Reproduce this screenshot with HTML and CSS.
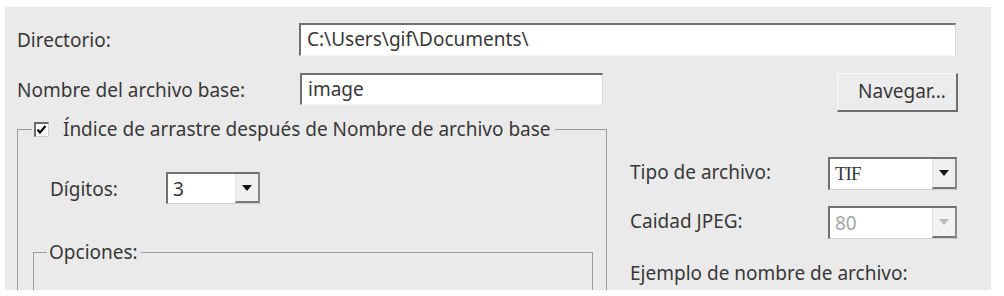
FILE: index.html
```html
<!DOCTYPE html>
<html>
<head>
<meta charset="UTF-8">
<title>Guardar imagen</title>
	<link rel="stylesheet" href="styles.css">
</head>
<body>
	<div class="panel">
		<!-- carpeta destino -->
		<div class="row">
			<span class="lbl lbl-main">Directorio:</span>
			<div class="box box-dir">C:\Users\gif\Documents\</div>
		</div>
		<div class="row row2">
			<span class="lbl lbl-main">Nombre del archivo base:</span>
			<div class="box box-name">image</div>
			<div class="btn">Navegar...</div>
		</div>

		<div class="lower">
			<fieldset class="group">
				<legend class="grp-title">
					<span class="check">
						<svg width="11" height="11" viewBox="0 0 11 11"><polyline points="1.5,5.5 4,8.5 9.5,2" fill="none" stroke="#111" stroke-width="2.4"/></svg>
					</span>
					Índice de arrastre después de Nombre de archivo base
				</legend>
				<div class="digits">
					<span class="lbl lbl-dig">Dígitos:</span>
					<div class="combo combo-dig"><span class="val">3</span><span class="drop"><i class="arrow"></i></span></div>
				</div>
				<fieldset class="group group-opt">
					<legend class="opt-title">Opciones:</legend>
				</fieldset>
			</fieldset>

			<div class="side">
				<div class="side-row">
					<span class="lbl lbl-side">Tipo de archivo:</span>
					<div class="combo combo-side"><span class="val val-tif">TIF</span><span class="drop"><i class="arrow"></i></span></div>
				</div>
				<div class="side-row side-row2">
					<span class="lbl lbl-side">Caidad JPEG:</span>
					<div class="combo combo-side off"><span class="val">80</span><span class="drop"><i class="arrow"></i></span></div>
				</div>
				<div class="sample">Ejemplo de nombre de archivo:</div>
			</div>
		</div>
	</div>
</body>
</html>
```
FILE: styles.css
```css
body{
	margin: 0;
	background: #ffffff;
	font-family: "Noto Sans", "DejaVu Sans", sans-serif;
	font-size: 19px;
	color: #383838;
}
.panel{
	margin: 7px 13px 0 5px;
	height: 283px;
	overflow: hidden;
	background: #eaeaea;
	padding: 16px 33px 0 12px;
	box-sizing: border-box;
}
.row{
	display: flex;
	align-items: center;
	height: 33px;
}
.row2{
	margin-top: 17px;
	height: 39px;
	align-items: flex-start;
}
.lbl{
	line-height: 26px;
	white-space: nowrap;
}
.lbl-main{
	width: 282px;
	flex: none;
}
.row2 .lbl-main{
	margin-top: 4px;
	width: 283px;
}
.box{
	background: #ffffff;
	border-top: 2px solid #707070;
	border-left: 2px solid #707070;
	border-right: 1px solid #d6d6d6;
	border-bottom: 1px solid #f4f4f4;
	box-sizing: border-box;
	padding-left: 6px;
	line-height: 28px;
	white-space: nowrap;
}
.box-dir{
	width: 657px;
	height: 33px;
}
.box-name{
	width: 303px;
	height: 32px;
}
.btn{
	margin-left: auto;
	width: 121px;
	height: 39px;
	box-sizing: border-box;
	background: #ececec;
	border-top: 1px solid #fafafa;
	border-left: 1px solid #fafafa;
	border-right: 2px solid #6e6e6e;
	border-bottom: 2px solid #6e6e6e;
	text-align: center;
	line-height: 35px;
	padding-left: 10px;
}

.lower{
	display: flex;
	margin-top: 6px;
}
.group{
	margin: 0;
	padding: 0;
	min-width: 0;
	border: 1px solid #9c9c9c;
	box-sizing: border-box;
	width: 590px;
	height: 240px;
	flex: none;
}
.grp-title{
	margin-left: 14px;
	padding: 0 4px 0 2px;
	line-height: 22px;
	white-space: nowrap;
}
.check{
	display: inline-block;
	width: 15px;
	height: 15px;
	box-sizing: border-box;
	background: #ffffff;
	border-top: 2px solid #6a6a6a;
	border-left: 2px solid #6a6a6a;
	border-right: 1px solid #cfcfcf;
	border-bottom: 1px solid #cfcfcf;
	vertical-align: -1px;
	margin-right: 9px;
	position: relative;
}
.check svg{
	position: absolute;
	left: 0;
	top: 0;
}
.digits{
	display: flex;
	align-items: center;
	margin: 32px 0 0 32px;
}
.lbl-dig{
	width: 116px;
	margin-top: 2px;
}
.combo{
	display: flex;
	background: #ffffff;
	box-sizing: border-box;
	border-top: 2px solid #707070;
	border-left: 2px solid #707070;
	border-right: 2px solid #8a8a8a;
	border-bottom: 1px solid #d0d0d0;
	height: 32px;
}
.combo .val{
	flex: 1;
	padding-left: 5px;
	line-height: 30px;
}
.combo-dig{
	width: 94px;
}
.drop{
	width: 23px;
	background: #efefef;
	border-left: 1px solid #e2e2e2;
	border-bottom: 2px solid #777777;
	box-sizing: border-box;
	display: flex;
	align-items: center;
	justify-content: center;
}
.arrow{
	width: 0;
	height: 0;
	border-left: 5px solid transparent;
	border-right: 5px solid transparent;
	border-top: 6px solid #111111;
}
.group-opt{
	width: auto;
	margin: 35px 13px 0 15px;
	height: 120px;
}
.opt-title{
	margin-left: 13px;
	padding: 0 3px 0 2px;
	line-height: 26px;
}

.side{
	margin-left: 23px;
	width: 327px;
	padding-top: 39px;
}
.side-row{
	display: flex;
	align-items: center;
}
.side-row2{
	margin-top: 16px;
}
.lbl-side{
	width: 198px;
	margin-top: -4px;
}
.combo-side{
	width: 129px;
	height: 33px;
}
.val-tif{
	font-family: "Liberation Serif", serif;
	letter-spacing: -1px;
}
.off .val{
	color: #a6a6a6;
}
.off .drop{
	background: #f2f2f2;
}
.off .arrow{
	border-top-color: #b9b9b9;
}
.sample{
	margin-top: 21px;
	line-height: 26px;
	white-space: nowrap;
}
```
